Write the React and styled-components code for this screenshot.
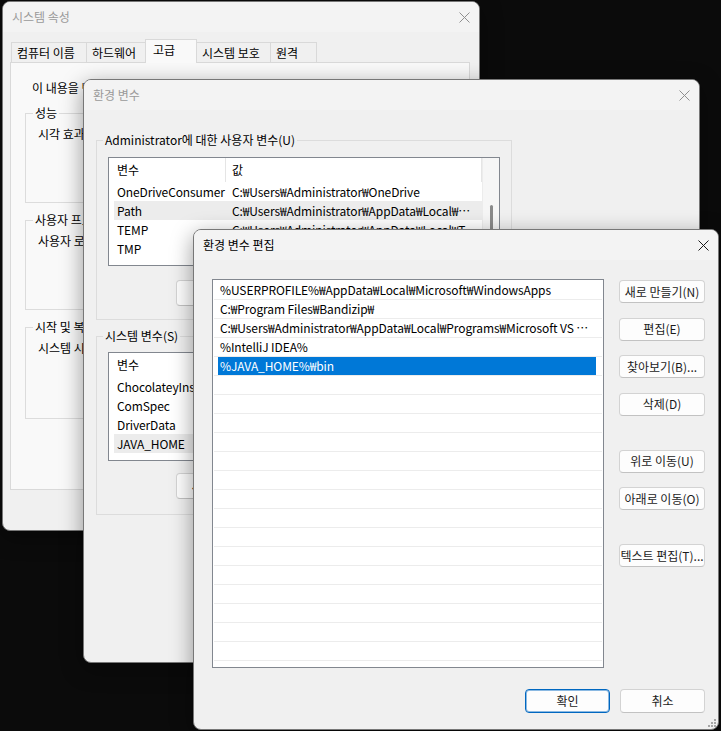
import React from "react";
import styled, { createGlobalStyle, css } from "styled-components";

const Global = createGlobalStyle`
  html, body { margin: 0; padding: 0; background: #0b0b0b; }
  body {
    width: 721px; height: 731px; overflow: hidden;
    font-family: "Noto Sans CJK KR", "Noto Sans", sans-serif;
    font-size: 12px; color: #000;
  }
  * { box-sizing: border-box; }
`;

const Desktop = styled.div`
  position: relative;
  width: 721px;
  height: 731px;
  overflow: hidden;
  background: #0b0b0b;
`;

const Window = styled.section`
  position: absolute;
  left: ${(p) => p.$x}px;
  top: ${(p) => p.$y}px;
  width: ${(p) => p.$w}px;
  height: ${(p) => p.$h}px;
  display: flex;
  flex-direction: column;
  background: #f0f0f0;
  border: 1px solid #777;
  border-radius: 8px;
  overflow: hidden;
  box-shadow: 0 6px 22px rgba(0, 0, 0, 0.4);
`;

const TitleBar = styled.header`
  flex: none;
  height: 30px;
  display: flex;
  align-items: center;
  justify-content: space-between;
  padding-left: 9px;
  background: #f3f3f3;
  color: ${(p) => (p.$active ? "#000" : "#9a9a9a")};
  line-height: 16px;
`;

const CloseBox = styled.span`
  width: 30px;
  height: 30px;
  display: flex;
  align-items: center;
  justify-content: center;
  color: ${(p) => (p.$active ? "#1a1a1a" : "#8f8f8f")};
`;

const CloseIcon = () => (
  <svg width="11" height="11" viewBox="0 0 11 11">
    <path d="M0.5 0.5 L10.5 10.5 M10.5 0.5 L0.5 10.5" stroke="currentColor" strokeWidth="1" fill="none" />
  </svg>
);

const Title = ({ children, active }) => (
  <TitleBar $active={active}>
    <span>{children}</span>
    <CloseBox $active={active}>
      <CloseIcon />
    </CloseBox>
  </TitleBar>
);

/* ---------- generic controls ---------- */

const Button = styled.button`
  flex: none;
  width: ${(p) => p.$w}px;
  height: ${(p) => p.$h || 23}px;
  padding: 0;
  font: inherit;
  line-height: 1;
  color: #1b1b1b;
  background: #fdfdfd;
  border: 1px solid #d3d3d3;
  border-bottom-color: #c2c2c2;
  border-radius: 4px;
  white-space: nowrap;
  ${(p) =>
    p.$primary &&
    css`
      border-color: #0067c0;
      box-shadow: inset 0 0 0 1px rgba(0, 103, 192, 0.45);
    `}
`;

const Group = styled.fieldset`
  margin: 0;
  min-width: 0;
  width: ${(p) => (p.$w ? `${p.$w}px` : "auto")};
  height: ${(p) => p.$h}px;
  border: 1px solid #dcdcdc;
  padding: ${(p) => p.$pt ?? 5}px ${(p) => p.$px || 12}px 0 ${(p) => p.$px || 12}px;
  display: flex;
  flex-direction: column;
`;

const Legend = styled.legend`
  padding: 0 2px;
  margin-left: -5px;
  line-height: 16px;
`;

const Text = styled.div`
  line-height: 16px;
  white-space: nowrap;
  margin-left: ${(p) => p.$ml || 0}px;
`;

/* ---------- window 1 : 시스템 속성 ---------- */

const SheetBody = styled.div`
  flex: 1;
  display: flex;
  flex-direction: column;
  padding: 7px 9px 0 7px;
`;

const TabRow = styled.div`
  display: flex;
  align-items: flex-end;
  height: 23px;
  padding-left: 1px;
`;

const Tab = styled.div`
  position: relative;
  width: ${(p) => p.$w + 1}px;
  margin-right: -1px;
  height: ${(p) => (p.$sel ? 24 : 20)}px;
  margin-bottom: ${(p) => (p.$sel ? -1 : 0)}px;
  padding-left: ${(p) => (p.$sel ? 7 : 5)}px;
  line-height: ${(p) => (p.$sel ? 20 : 19)}px;
  border: 1px solid #d9d9d9;
  border-bottom: none;
  background: ${(p) => (p.$sel ? "#f9f9f9" : "#f0f0f0")};
  z-index: ${(p) => (p.$sel ? 1 : 0)};
  white-space: nowrap;
`;

const Panel = styled.div`
  flex: none;
  height: 428px;
  background: #f9f9f9;
  border: 1px solid #d9d9d9;
  padding: 17px 14px 0 14px;
  display: flex;
  flex-direction: column;
  gap: 9px;
`;

const GroupButtonRow = styled.div`
  margin-top: ${(p) => (p.$mt != null ? `${p.$mt}px` : "auto")};
  margin-bottom: ${(p) => (p.$mt != null ? 0 : 12)}px;
  display: flex;
  justify-content: flex-end;
  gap: ${(p) => p.$gap || 10}px;
`;

const PanelButtonRow = styled.div`
  display: flex;
  justify-content: flex-end;
  margin-top: 2px;
`;

const Footer = styled.div`
  flex: 1;
  display: flex;
  justify-content: flex-end;
  align-items: center;
  gap: 8px;
`;

/* ---------- window 2 : 환경 변수 ---------- */

const EnvBody = styled.div`
  flex: 1;
  display: flex;
  flex-direction: column;
  align-items: flex-start;
  padding: 22px 0 0 12px;
  gap: 8px;
`;

const ListView = styled.div`
  flex: none;
  width: 392px;
  height: 109px;
  border: 1px solid #82878f;
  background: #fff;
  display: flex;
  margin-top: ${(p) => p.$mt || 0}px;
`;

const ListMain = styled.div`
  flex: 1;
  min-width: 0;
  display: flex;
  flex-direction: column;
`;

const Header = styled.div`
  flex: none;
  height: 24px;
  display: flex;
`;

const HeaderCell = styled.div`
  ${(p) => (p.$w ? `width: ${p.$w}px; flex: none;` : "flex: 1;")}
  padding-left: ${(p) => p.$pl}px;
  line-height: 24px;
  border-right: 1px solid #e5e5e5;
  white-space: nowrap;
`;

const VarRow = styled.div`
  flex: none;
  height: 19px;
  margin-left: 5px;
  display: flex;
  line-height: 19px;
  background: ${(p) => (p.$sel ? "#ececec" : "transparent")};
`;

const VarCell = styled.div`
  ${(p) => (p.$w ? `width: ${p.$w}px; flex: none;` : "flex: 1;")}
  min-width: 0;
  padding-left: ${(p) => p.$pl}px;
  padding-right: ${(p) => (p.$w ? 0 : 3)}px;
  letter-spacing: -0.1px;
  white-space: nowrap;
  overflow: hidden;
  text-overflow: ellipsis;
`;

const ScrollTrack = styled.div`
  flex: none;
  width: 17px;
  background: #f6f6f6;
  border-left: 1px solid #ececec;
  display: flex;
  justify-content: center;
`;

const ScrollThumb = styled.div`
  width: 3px;
  height: 56px;
  margin-top: ${(p) => p.$top}px;
  margin-left: 1px;
  border-radius: 2px;
  background: #8a8a8a;
`;

/* ---------- window 3 : 환경 변수 편집 ---------- */

const EditBody = styled.div`
  flex: 1;
  display: flex;
  flex-direction: column;
  padding: 19px 12px 0 18px;
`;

const EditMain = styled.div`
  display: flex;
  gap: 15px;
`;

const PathList = styled.div`
  flex: none;
  width: 392px;
  height: 389px;
  border: 1px solid #82878f;
  background: #fff;
  padding: 1px 1px 0 1px;
  display: flex;
  flex-direction: column;
`;

const PathRow = styled.div`
  flex: none;
  height: 19px;
  border-bottom: 1px solid #ececec;
  padding: 0 6px 0 4px;
  display: flex;
`;

const PathItem = styled.div`
  flex: 1;
  min-width: 0;
  height: 18px;
  line-height: 18px;
  padding-left: 2px;
  padding-right: 2px;
  letter-spacing: -0.1px;
  white-space: nowrap;
  overflow: hidden;
  text-overflow: ellipsis;
  background: ${(p) => (p.$sel ? "#0078d7" : "transparent")};
  color: ${(p) => (p.$sel ? "#fff" : "#000")};
`;

const SideButtons = styled.div`
  display: flex;
  flex-direction: column;
  gap: 14.5px;
  padding-top: 1px;
`;

const Spacer = styled.div`
  height: 5px;
`;

const EditFooter = styled.div`
  display: flex;
  justify-content: flex-end;
  gap: 10px;
  margin-top: 21px;
  padding-right: 1px;
`;

const Grip = styled.svg`
  position: absolute;
  right: 2px;
  bottom: 2px;
`;

/* ---------- data ---------- */

const userVars = [
  ["OneDriveConsumer", "C:₩Users₩Administrator₩OneDrive"],
  ["Path", "C:₩Users₩Administrator₩AppData₩Local₩Microsoft₩WindowsApps;C:₩Program Files₩Bandizip₩;", true],
  ["TEMP", "C:₩Users₩Administrator₩AppData₩Local₩Temp"],
  ["TMP", "C:₩Users₩Administrator₩AppData₩Local₩Temp"],
];

const sysVars = [
  ["ChocolateyInstall", "C:₩ProgramData₩chocolatey"],
  ["ComSpec", "C:₩Windows₩system32₩cmd.exe"],
  ["DriverData", "C:₩Windows₩System32₩Drivers₩DriverData"],
  ["JAVA_HOME", "C:₩Program Files₩Java₩jdk-17", true],
];

const paths = [
  "%USERPROFILE%₩AppData₩Local₩Microsoft₩WindowsApps",
  "C:₩Program Files₩Bandizip₩",
  "C:₩Users₩Administrator₩AppData₩Local₩Programs₩Microsoft VS Code₩bin",
  "%IntelliJ IDEA%",
  "%JAVA_HOME%₩bin",
];
const selectedPath = 4;
const pathRows = Array.from({ length: 20 }, (_, i) => paths[i] || "");

const tabs = [
  ["컴퓨터 이름", 75],
  ["하드웨어", 59],
  ["고급", 51, true],
  ["시스템 보호", 74],
  ["원격", 46],
];

const VarList = ({ rows, mt }) => (
  <ListView $mt={mt}>
    <ListMain>
      <Header>
        <HeaderCell $w={117} $pl={8}>변수</HeaderCell>
        <HeaderCell $pl={6}>값</HeaderCell>
      </Header>
      {rows.map(([name, value, sel]) => (
        <VarRow key={name} $sel={sel}>
          <VarCell $w={112} $pl={3}>{name}</VarCell>
          <VarCell $pl={6}>{value}</VarCell>
        </VarRow>
      ))}
    </ListMain>
    <ScrollTrack>
      <ScrollThumb $top={47} />
    </ScrollTrack>
  </ListView>
);

export default function App() {
  return (
    <>
      <Global />
      <Desktop>
        {/* 시스템 속성 */}
        <Window $x={2} $y={1} $w={478} $h={530}>
          <Title>시스템 속성</Title>
          <SheetBody>
            <TabRow>
              {tabs.map(([label, w, sel]) => (
                <Tab key={label} $w={w} $sel={sel}>{label}</Tab>
              ))}
            </TabRow>
            <Panel>
              <Text $ml={7}>이 내용을 변경하려면 관리자로 로그온해야 합니다.</Text>
              <Group $h={98}>
                <Legend>성능</Legend>
                <Text>시각 효과, 프로세서 일정, 메모리 사용 및 가상 메모리</Text>
                <GroupButtonRow>
                  <Button $w={86}>설정(S)...</Button>
                </GroupButtonRow>
              </Group>
              <Group $h={98}>
                <Legend>사용자 프로필</Legend>
                <Text>사용자 로그인에 관련된 바탕 화면 설정</Text>
                <GroupButtonRow>
                  <Button $w={86}>설정(E)...</Button>
                </GroupButtonRow>
              </Group>
              <Group $h={100}>
                <Legend>시작 및 복구</Legend>
                <Text>시스템 시작, 시스템 오류 및 디버깅 정보</Text>
                <GroupButtonRow>
                  <Button $w={86}>설정(T)...</Button>
                </GroupButtonRow>
              </Group>
              <PanelButtonRow>
                <Button $w={110}>환경 변수(N)...</Button>
              </PanelButtonRow>
            </Panel>
            <Footer>
              <Button $w={86} $primary>확인</Button>
              <Button $w={86}>취소</Button>
              <Button $w={86}>적용(A)</Button>
            </Footer>
          </SheetBody>
        </Window>

        {/* 환경 변수 */}
        <Window $x={83} $y={79} $w={617} $h={584}>
          <Title>환경 변수</Title>
          <EnvBody>
            <Group $w={416} $h={188} $pt={0} $px={11}>
              <Legend>Administrator에 대한 사용자 변수(U)</Legend>
              <VarList rows={userVars} mt={9} />
              <GroupButtonRow $gap={12} $mt={14}>
                <Button $w={118} $h={26}>새로 만들기(N)...</Button>
                <Button $w={100} $h={26}>편집(E)...</Button>
                <Button $w={82} $h={26}>삭제(D)</Button>
              </GroupButtonRow>
            </Group>
            <Group $w={416} $h={187} $pt={0} $px={11}>
              <Legend>시스템 변수(S)</Legend>
              <VarList rows={sysVars} mt={8} />
              <GroupButtonRow $gap={12} $mt={12}>
                <Button $w={118} $h={26}>새로 만들기(W)...</Button>
                <Button $w={100} $h={26}>편집(I)...</Button>
                <Button $w={82} $h={26}>삭제(L)</Button>
              </GroupButtonRow>
            </Group>
          </EnvBody>
        </Window>

        {/* 환경 변수 편집 */}
        <Window $x={193} $y={229} $w={526} $h={501}>
          <Title active>환경 변수 편집</Title>
          <EditBody>
            <EditMain>
              <PathList>
                {pathRows.map((p, i) => (
                  <PathRow key={i}>
                    <PathItem $sel={i === selectedPath}>{p}</PathItem>
                  </PathRow>
                ))}
              </PathList>
              <SideButtons>
                <Button $w={86}>새로 만들기(N)</Button>
                <Button $w={86}>편집(E)</Button>
                <Button $w={86}>찾아보기(B)...</Button>
                <Button $w={86}>삭제(D)</Button>
                <Spacer />
                <Button $w={86}>위로 이동(U)</Button>
                <Button $w={86}>아래로 이동(O)</Button>
                <Spacer />
                <Button $w={86}>텍스트 편집(T)...</Button>
              </SideButtons>
            </EditMain>
            <EditFooter>
              <Button $w={85} $h={24} $primary>확인</Button>
              <Button $w={85} $h={24}>취소</Button>
            </EditFooter>
          </EditBody>
          <Grip width="10" height="10" viewBox="0 0 10 10">
            <g fill="#a6a6a6">
              <rect x="8" y="2" width="2" height="2" />
              <rect x="5" y="5" width="2" height="2" />
              <rect x="8" y="5" width="2" height="2" />
              <rect x="2" y="8" width="2" height="2" />
              <rect x="5" y="8" width="2" height="2" />
              <rect x="8" y="8" width="2" height="2" />
            </g>
          </Grip>
        </Window>
      </Desktop>
    </>
  );
}
